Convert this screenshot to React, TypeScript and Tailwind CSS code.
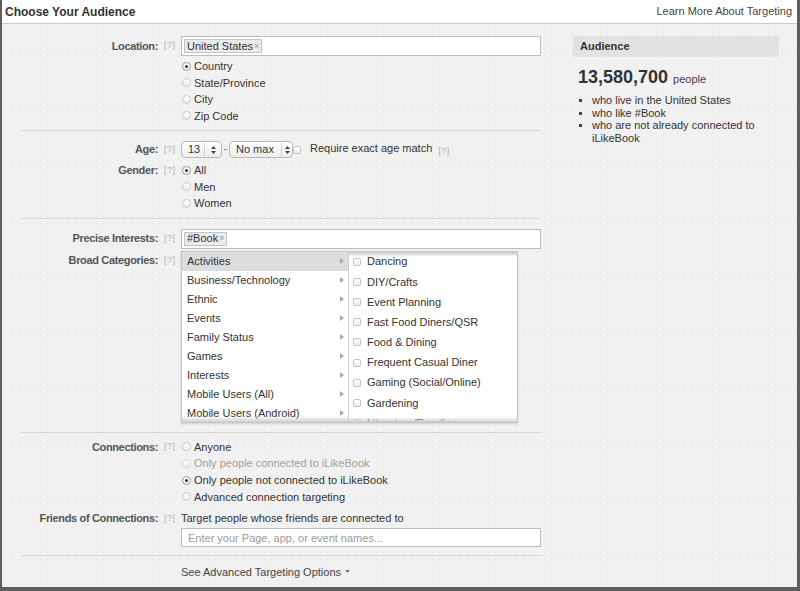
import React from "react";

const font = { fontFamily: '"Liberation Sans", Arial, sans-serif' };

function Help() {
  return <span className="text-[9px] text-[#b3b3b3] tracking-[0.5px]">[?]</span>;
}

function Radio({ checked = false, faint = false }: { checked?: boolean; faint?: boolean }) {
  return (
    <span
      className={
        "relative inline-block w-[9px] h-[9px] rounded-full border bg-gradient-to-b from-white to-[#ececec] shrink-0 " +
        (faint ? "border-[#dcdcdc]" : checked ? "border-[#9a9a9a]" : "border-[#c9c9c9]")
      }
    >
      {checked && <span className="absolute left-[2px] top-[2px] w-[3px] h-[3px] rounded-full bg-[#333]" />}
    </span>
  );
}

function RadioList({
  items,
  lh,
}: {
  items: { label: string; checked?: boolean; disabled?: boolean }[];
  lh: string;
}) {
  return (
    <div className="flex flex-col">
      {items.map((it) => (
        <div key={it.label} className={"flex items-center " + lh}>
          <span className="w-[13px] pl-[1px] flex items-center">
            <Radio checked={it.checked} faint={it.disabled} />
          </span>
          <span className={"text-[11px] " + (it.disabled ? "text-[#a0a0a0]" : "text-[#333]")}>{it.label}</span>
        </div>
      ))}
    </div>
  );
}

function Label({ text, className = "" }: { text: string; className?: string }) {
  return (
    <div className={"flex items-center shrink-0 " + className}>
      <span className="w-[156px] text-right text-[11px] font-bold text-[#555] tracking-[-0.35px]">{text}</span>
      <span className="w-[23px] pl-[6px] flex items-center">
        <Help />
      </span>
    </div>
  );
}

function Tag({ text }: { text: string }) {
  return (
    <span className="inline-flex items-center h-[14px] px-[2px] bg-[#ebebeb] border border-[#c4c4c4] text-[11px] text-[#333] leading-none">
      {text}
      <span className="text-[9px] text-[#9a9a9a] ml-[1px]">×</span>
    </span>
  );
}

function UpDown() {
  return (
    <svg width="5" height="8" viewBox="0 0 5 8">
      <path d="M2.5 0 L5 3 L0 3 Z" fill="#444" />
      <path d="M2.5 8 L5 5 L0 5 Z" fill="#444" />
    </svg>
  );
}

function Select({ text, w, textW }: { text: string; w: string; textW: string }) {
  return (
    <div
      className={
        "flex items-center h-[17px] rounded-[4px] border border-[#b8b8b8] bg-gradient-to-b from-white to-[#ececec] " + w
      }
    >
      <span className={"text-[11px] text-[#333] pl-[6px] " + textW}>{text}</span>
      <span className="w-px h-[13px] bg-[#d4d4d4]" />
      <span className="flex-1 flex justify-center">
        <UpDown />
      </span>
    </div>
  );
}

function Arrow() {
  return (
    <svg width="4" height="6" viewBox="0 0 4 6">
      <path d="M0 0 L4 3 L0 6 Z" fill="#a8a8a8" />
    </svg>
  );
}

function Check() {
  return (
    <span className="inline-block w-[8px] h-[8px] rounded-[2px] border border-[#c4c4c4] bg-gradient-to-b from-white to-[#eee] shrink-0" />
  );
}

function Sep() {
  return <div className="ml-[19px] h-px bg-[#d8d8d8]" />;
}

const cats = [
  "Activities",
  "Business/Technology",
  "Ethnic",
  "Events",
  "Family Status",
  "Games",
  "Interests",
  "Mobile Users (All)",
  "Mobile Users (Android)",
];

const subs = [
  "Dancing",
  "DIY/Crafts",
  "Event Planning",
  "Fast Food Diners/QSR",
  "Food & Dining",
  "Frequent Casual Diner",
  "Gaming (Social/Online)",
  "Gardening",
  "Literature/Reading",
];

export default function App() {
  return (
    <div
      style={font}
      className="w-[800px] h-[591px] flex flex-col bg-[#f1f1f1] border-l-2 border-r-[3px] border-b-[4px] border-[#5e5e5e] overflow-hidden"
    >
      {/* header */}
      <div className="h-[24px] shrink-0 bg-white border-b border-[#cbcbcb] flex items-center justify-between pl-[3px] pr-[5px]">
        <span className="text-[12px] font-bold text-[#333]">Choose Your Audience</span>
        <span className="text-[11px] text-[#444]">Learn More About Targeting</span>
      </div>

      <div className="flex-1 flex bg-[radial-gradient(#e2e2e2_0.6px,transparent_0.7px)] bg-[length:7px_7px]">
        {/* form column */}
        <div className="w-[539px] shrink-0 flex flex-col">
          {/* location */}
          <div className="pt-[12px] pb-[6px]">
            <div className="flex items-center">
              <Label text="Location:" />
              <div className="w-[360px] h-[20px] bg-white border border-[#bdbdbd] flex items-center pl-[2px]">
                <Tag text="United States" />
              </div>
            </div>
            <div className="pl-[179px] mt-[2px]">
              <RadioList
                lh="h-[16.5px]"
                items={[
                  { label: "Country", checked: true },
                  { label: "State/Province" },
                  { label: "City" },
                  { label: "Zip Code" },
                ]}
              />
            </div>
          </div>
          <Sep />

          {/* age / gender */}
          <div className="pt-[10px] pb-[6px]">
            <div className="flex items-center h-[17px]">
              <Label text="Age:" />
              <Select text="13" w="w-[41px]" textW="w-[22px]" />
              <span className="w-[7px] flex justify-center">
                <span className="w-[3px] h-px bg-[#888]" />
              </span>
              <Select text="No max" w="w-[64px]" textW="w-[51px]" />
              <span className="mt-[-2px]">
                <Check />
              </span>
              <span className="text-[11px] text-[#333] ml-[9px] mt-[-2px]">Require exact age match</span>
              <span className="ml-[6px] mt-[-1px]">
                <Help />
              </span>
            </div>
            <div className="flex mt-[4px]">
              <div className="h-[16.5px] flex items-center">
                <Label text="Gender:" />
              </div>
              <RadioList
                lh="h-[16.5px]"
                items={[{ label: "All", checked: true }, { label: "Men" }, { label: "Women" }]}
              />
            </div>
          </div>
          <Sep />

          {/* interests */}
          <div className="pt-[10px] pb-[9px]">
            <div className="flex items-center">
              <Label text="Precise Interests:" />
              <div className="w-[360px] h-[20px] bg-white border border-[#bdbdbd] flex items-center pl-[2px]">
                <Tag text="#Book" />
              </div>
            </div>
            <div className="flex mt-[2px]">
              <div className="h-[20px] flex items-center">
                <Label text="Broad Categories:" />
              </div>
              <div className="w-[337px] h-[172px] flex border border-[#c6c6c6] bg-white shadow-[0_1px_2px_rgba(0,0,0,0.15)]">
                <div className="relative w-[167px] border-r border-[#cfcfcf] overflow-hidden">
                  {cats.map((c, i) => (
                    <div
                      key={c}
                      className={
                        "h-[19px] shrink-0 flex items-center justify-between pl-[5px] pr-[4px] text-[11px] text-[#333] " +
                        (i === 0 ? "bg-[#dcdcdc]" : "")
                      }
                    >
                      <span>{c}</span>
                      <Arrow />
                    </div>
                  ))}
                  <div className="absolute left-0 right-0 bottom-0 h-[6px] bg-gradient-to-b from-transparent to-[#cfcfcf]" />
                </div>
                <div className="relative flex-1 overflow-hidden">
                  {subs.map((s) => (
                    <div key={s} className="h-[20.2px] flex items-center pl-[4px] text-[11px] text-[#333]">
                      <Check />
                      <span className="ml-[6px]">{s}</span>
                    </div>
                  ))}
                  <div className="absolute left-0 right-0 top-0 h-[5px] bg-gradient-to-b from-[#c8c8c8] to-transparent" />
                  <div className="absolute left-0 right-0 bottom-0 h-[5px] bg-gradient-to-b from-transparent to-[#d0d0d0]" />
                </div>
              </div>
            </div>
          </div>
          <Sep />

          {/* connections */}
          <div className="pt-[6px] pb-[8px]">
            <div className="flex">
              <div className="h-[16.7px] flex items-center">
                <Label text="Connections:" />
              </div>
              <RadioList
                lh="h-[16.7px]"
                items={[
                  { label: "Anyone" },
                  { label: "Only people connected to iLikeBook", disabled: true },
                  { label: "Only people not connected to iLikeBook", checked: true },
                  { label: "Advanced connection targeting" },
                ]}
              />
            </div>
            <div className="flex items-center h-[16px] mt-[5px]">
              <Label text="Friends of Connections:" />
              <span className="text-[11px] text-[#333]">Target people whose friends are connected to</span>
            </div>
            <div className="pl-[179px] mt-[2px]">
              <div className="w-[360px] h-[19px] bg-white border border-[#bdbdbd] flex items-center pl-[6px] text-[11px] text-[#9a9a9a]">
                Enter your Page, app, or event names...
              </div>
            </div>
          </div>
          <Sep />

          <div className="pt-[8px] pl-[179px] h-[16px] flex items-center box-content">
            <span className="text-[11px] text-[#444]">See Advanced Targeting Options</span>
            <svg width="5" height="4" viewBox="0 0 5 4" className="ml-[4px]">
              <path d="M0 0 L5 0 L2.5 3 Z" fill="#777" />
            </svg>
          </div>
        </div>

        {/* audience panel */}
        <div className="ml-[32px] w-[206px] shrink-0 pt-[12px]">
          <div className="h-[21px] bg-[#e2e2e2] flex items-center pl-[7px] text-[11px] font-bold text-[#333]">
            Audience
          </div>
          <div className="mt-[9px] pl-[5px] h-[22px] flex items-baseline">
            <span className="text-[18px] font-bold text-[#333] leading-[22px]">13,580,700</span>
            <span className="text-[11px] text-[#444] ml-[5px]">people</span>
          </div>
          <ul className="mt-[6px] pl-[6px] text-[11px] text-[#333] leading-[12.5px]">
            {["who live in the United States", "who like #Book", "who are not already connected to iLikeBook"].map(
              (t) => (
                <li key={t} className="flex items-start">
                  <span className="w-[13px] shrink-0 pt-[5px]">
                    <span className="block w-[3px] h-[3px] bg-[#444]" />
                  </span>
                  <span className="w-[170px]">{t}</span>
                </li>
              )
            )}
          </ul>
        </div>
      </div>
    </div>
  );
}
